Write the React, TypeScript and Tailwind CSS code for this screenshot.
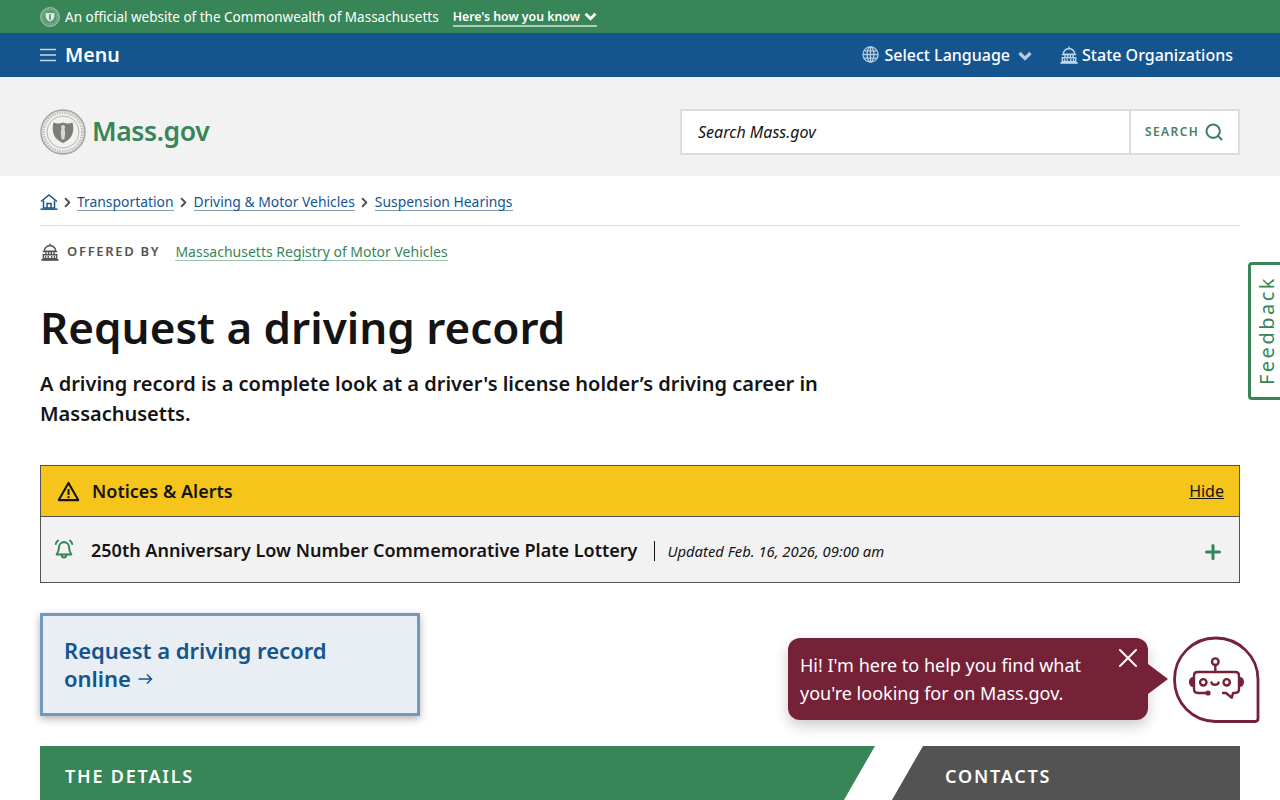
import React from 'react';
import { Search, Plus, X, ChevronRight } from 'lucide-react';

const HeavyChevron: React.FC<{ className?: string }> = ({ className }) => (
  <svg viewBox="0 0 14 10" fill="none" stroke="currentColor" strokeWidth="3.200" className={className}>
    <path d="M1.500 2 7 7.500 12.500 2" />
  </svg>
);

const Hamburger: React.FC<{ className?: string }> = ({ className }) => (
  <svg viewBox="0 0 16 14" fill="none" stroke="currentColor" strokeWidth="1.500" className={className}>
    <path d="M0 1.500h16M0 7h16M0 12.500h16" />
  </svg>
);

const Capitol: React.FC<{ className?: string }> = ({ className }) => (
  <svg viewBox="0 0 20 20" fill="none" stroke="currentColor" strokeWidth="1.500" className={className}>
    <path d="M10 .5v2.500" />
    <path d="M3.500 9c.6-3.600 3-6 6.500-6s5.900 2.400 6.500 6z" />
    <path d="M2 9.500h16M2.500 17.500v-4.500h15v4.500z" />
    <path d="M5.500 9.500v3.500M8.500 9.500v3.500M11.500 9.500v3.500M14.500 9.500v3.500" />
    <path d="M5 14.500v3M8 14.500v3M12 14.500v3M15 14.500v3" />
    <path d="M.5 18.800h19" strokeWidth="2" />
  </svg>
);

const Globe: React.FC<{ className?: string }> = ({ className }) => (
  <svg viewBox="0 0 18 18" fill="none" stroke="currentColor" strokeWidth="1.400" className={className}>
    <circle cx="9" cy="9" r="8" />
    <ellipse cx="9" cy="9" rx="3.600" ry="8" />
    <path d="M9 1v16M1 9h16M2.200 5.200h13.600M2.200 12.800h13.600" />
  </svg>
);

const Seal: React.FC<{ className?: string; ring: string; face: string; shield: string; inner: string }> = ({ className, ring, face, shield, inner }) => (
  <svg viewBox="0 0 46 46" className={className}>
    <circle cx="23" cy="23" r="22" fill={face} stroke={ring} strokeWidth="1.500" />
    <circle cx="23" cy="23" r="19.500" fill="none" stroke={ring} strokeWidth="3" strokeDasharray="1.500 1" opacity="0.6" />
    <circle cx="23" cy="23" r="16" fill={face} stroke={ring} strokeWidth="0.800" />
    <path d="M13.500 13.500c3 1.200 6 1.500 9.500 0 3.500 1.500 6.500 1.200 9.500 0 .8 3 1 6 .5 9-.8 5.500-4.500 9-10 11.500-5.500-2.500-9.200-6-10-11.500-.5-3-.3-6 .5-9z" fill={shield} />
    <path d="M23 16c1.400 0 2 1 2 2.200 0 .8-.4 1.400-.6 1.800 1.100 2 1 6-.2 10.500h-2.400c-1.200-4.500-1.300-8.500-.2-10.500-.2-.4-.6-1-.6-1.800 0-1.200.6-2.200 2-2.200z" fill={inner} />
  </svg>
);

const Bot: React.FC<{ className?: string }> = ({ className }) => (
  <svg viewBox="0 0 88 88" fill="none" stroke="#752138" strokeWidth="2.400" strokeLinejoin="round" strokeLinecap="round" className={className}>
    <path d="M43.800 2C20.500 2 2.500 20.500 2.500 43.500 2.500 67 20.500 85.500 43.800 85.500H83c1.800 0 3-1.200 3-3V43.500C86 20.500 67 2 43.800 2z" strokeWidth="2.800" />
    <circle cx="43.300" cy="25.700" r="3.300" />
    <path d="M43.300 29v7" />
    <path d="M26 57c-2.500 0-4-1.500-4-4V39.500c0-2.200 1.500-3.500 3.500-3.500h38c2 0 3.500 1.300 3.500 3.500V53c0 2.500-1.500 4-4 4h-2l-1.200 4.700L54 57h-3" />
    <path d="M26 57h10" />
    <circle cx="36" cy="57" r="2.600" fill="#752138" stroke="none" />
    <circle cx="31.300" cy="46.300" r="3.200" />
    <circle cx="54.700" cy="46.300" r="3.200" />
    <path d="M39.500 46.500c.6 3 6.400 3 7 0" />
    <path d="M21 41c-3 .4-4 2.500-4 5s1 4.600 4 5zM68 41c3 .4 4 2.500 4 5s-1 4.600-4 5z" fill="#752138" stroke="none" />
  </svg>
);

const BellRing: React.FC<{ className?: string }> = ({ className }) => (
  <svg viewBox="0 0 24 24" fill="none" stroke="currentColor" strokeWidth="2.200" strokeLinecap="round" strokeLinejoin="round" className={className}>
    <path d="M6.500 10a5.500 5.500 0 0 1 11 0c0 4 1.200 6 2.500 8H4c1.300-2 2.500-4 2.500-8z" />
    <path d="M9.500 18c0 2 1 3.300 2.500 3.300s2.500-1.300 2.500-3.300" />
    <path d="M3 6.500c.5-1.600 1.300-2.800 2.500-3.700M21 6.500c-.5-1.600-1.300-2.800-2.500-3.700" />
  </svg>
);

const TriangleAlert: React.FC<{ className?: string }> = ({ className }) => (
  <svg viewBox="0 0 24 22" fill="none" stroke="currentColor" strokeWidth="2.200" strokeLinejoin="round" className={className}>
    <path d="M12 2 1.800 20h20.400z" />
    <path d="M12 8.500v6" strokeWidth="2.200" />
    <circle cx="12" cy="17" r="1.200" fill="currentColor" stroke="none" />
  </svg>
);

const HomeIcon: React.FC<{ className?: string }> = ({ className }) => (
  <svg viewBox="0 0 18 16" fill="none" stroke="currentColor" strokeWidth="1.500" className={className}>
    <path d="M1 7.500 9 1l8 6.500" />
    <path d="M3.500 6.500v7.500h11v-7.500" />
    <path d="M7 14v-4.500h4v4.500" />
    <path d="M.5 15.200h17" />
  </svg>
);

const SmallArrow: React.FC<{ className?: string }> = ({ className }) => (
  <svg viewBox="0 0 15 12" fill="none" stroke="currentColor" strokeWidth="1.500" className={className}>
    <path d="M.5 6h13M9 1.500 13.500 6 9 10.500" />
  </svg>
);

const Crumb: React.FC<{ label: string }> = ({ label }) => (
  <a className="text-[13.900px] leading-[17px] text-[#14558f] border-b border-[#7a9cbd]">{label}</a>
);

const App: React.FC = () => {
  return (
    <div className="relative h-[800px] overflow-hidden bg-white font-['Noto_Sans',sans-serif] text-[#141414]">
      <div className="h-[33px] bg-[#388557] flex items-center pl-10 pt-[2px] text-white">
        <Seal className="mb-[2px] w-[20px] h-[20px]" ring="#b9d3c3" face="#57966f" shield="#dfeae3" inner="#57966f" />
        <span className="ml-[5px] text-[13.500px]">An official website of the Commonwealth of Massachusetts</span>
        <span className="ml-[14px] flex items-center text-[12.300px] font-semibold border-b-2 border-[#afcdbb] leading-[16px]">
          Here's how you know
          <HeavyChevron className="ml-[4px] w-[13px] h-[9px]" />
        </span>
      </div>

      <div className="h-[44px] bg-[#14558f] flex items-center justify-between pl-10 pr-[47px] text-white">
        <div className="flex items-center">
          <Hamburger className="w-[16px] h-[14px] text-[#c8d8e8]" />
          <span className="ml-[9px] text-[19.600px] font-semibold">Menu</span>
        </div>
        <div className="flex items-center">
          <Globe className="w-[17px] h-[17px] mb-[1px] text-[#b5cbe0]" />
          <span className="ml-[5px] text-[16px] font-medium">Select Language</span>
          <HeavyChevron className="ml-[8px] mt-[2px] w-[14px] h-[10px] text-[#b5cbe0]" />
          <Capitol className="ml-[28px] w-[18px] h-[18px] text-[#c3d5e6]" />
          <span className="ml-[4px] text-[16px] font-medium">State Organizations</span>
        </div>
      </div>

      <div className="h-[99px] bg-[#f2f2f2] flex items-center justify-between px-10 pt-[11px]">
        <div className="flex items-center">
          <Seal className="w-[46px] h-[46px]" ring="#a3a39f" face="#f1f1ef" shield="#7d7d76" inner="#d8d8d2" />
          <span className="ml-[6px] text-[26.500px] font-semibold text-[#388557] tracking-[-0.4px]">Mass.gov</span>
        </div>
        <div className="w-[560px] h-[46px] bg-white border-2 border-[#dcdcdc] flex items-center">
          <span className="flex-1 pl-[16px] text-[16px] italic text-[#141414]">Search Mass.gov</span>
          <div className="w-[109px] h-full border-l-2 border-[#dcdcdc] flex items-center pl-[14px] text-[#467e5f]">
            <span className="text-[12px] font-semibold tracking-[1.400px]">SEARCH</span>
            <Search className="ml-[5px] w-[20px] h-[20px]" strokeWidth={2.500} />
          </div>
        </div>
      </div>

      <div className="mx-10">
        <div className="h-[50px] border-b border-[#dcdcdc] flex items-center pt-[3px]">
          <HomeIcon className="w-[18px] h-[16px] text-[#14558f]" />
          <ChevronRight className="ml-[2px] mr-[2px] w-[15px] h-[15px] text-[#535353]" strokeWidth={3} />
          <Crumb label="Transportation" />
          <ChevronRight className="mx-[2.500px] w-[15px] h-[15px] text-[#535353]" strokeWidth={3} />
          <Crumb label="Driving & Motor Vehicles" />
          <ChevronRight className="mx-[2.500px] w-[15px] h-[15px] text-[#535353]" strokeWidth={3} />
          <Crumb label="Suspension Hearings" />
        </div>

        <div className="h-[52px] flex items-center">
          <Capitol className="ml-[1px] w-[18px] h-[18px] text-[#535353]" />
          <span className="ml-[8px] text-[13px] font-semibold tracking-[1.700px] text-[#535353]">OFFERED BY</span>
          <a className="ml-[15px] text-[14px] leading-[17px] text-[#388557] border-b border-[#9dc2ab]">Massachusetts Registry of Motor Vehicles</a>
        </div>

        <h1 className="mt-[19px] text-[44px] leading-[60px] font-semibold text-[#141414]">Request a driving record</h1>
        <p className="mt-[12px] w-[860px] text-[20px] leading-[30px] font-semibold text-[#141414]">
          A driving record is a complete look at a driver's license holder’s driving career in Massachusetts.
        </p>

        <div className="mt-[36px] border border-[#535353]">
          <div className="h-[51px] bg-[#f6c51b] border-b border-[#535353] flex items-center pl-[16px] pr-[15px]">
            <TriangleAlert className="w-[23px] h-[21px] text-[#141414]" />
            <span className="ml-[12px] text-[18px] font-semibold">Notices & Alerts</span>
            <a className="ml-auto text-[16px] underline">Hide</a>
          </div>
          <div className="h-[65px] bg-[#f2f2f2] flex items-center pl-[12px] pr-[15px] pt-[2px]">
            <BellRing className="mb-[3px] w-[22px] h-[22px] text-[#388557]" />
            <span className="ml-[16px] text-[18px] font-semibold">250th Anniversary Low Number Commemorative Plate Lottery</span>
            <span className="ml-[17px] pl-[12px] border-l border-[#141414] text-[14.800px] leading-[20px] italic text-[#141414]">Updated Feb. 16, 2026, 09:00 am</span>
            <Plus className="ml-auto mt-[2px] w-[22px] h-[22px] text-[#388557]" strokeWidth={3.300} />
          </div>
        </div>

        <div className="mt-[30px] w-[380px] h-[103px] bg-[#e8eef4] border-[3px] border-[#7299bc] shadow-[0_3px_8px_rgba(0,0,0,0.3)] pl-[21px] pt-[20px] text-[22px] leading-[28px] font-semibold text-[#14558f]">
          Request a driving record
          <br />
          <span className="inline-flex items-center">
            online
            <SmallArrow className="ml-[7px] mt-[2px] w-[15px] h-[12px]" />
          </span>
        </div>

        <div className="mt-[30px] flex h-[80px]">
          <div className="w-[835px] bg-[#388557] [clip-path:polygon(0_0,100%_0,789px_100%,0_100%)] pl-[25px] pt-[18px] text-[18px] leading-[25px] font-semibold tracking-[1.800px] text-white">
            THE DETAILS
          </div>
          <div className="ml-[2px] flex-1 bg-[#535353] [clip-path:polygon(46px_0,100%_0,100%_100%,0_100%)] pl-[68px] pt-[18px] text-[18px] leading-[25px] font-semibold tracking-[1.800px] text-white">
            CONTACTS
          </div>
        </div>
      </div>

      <div className="absolute right-0 top-[262px] w-[32px] h-[138px] bg-white border-[3px] border-r-0 border-[#388557] rounded-l-[4px] flex items-center justify-center">
        <span className="ml-[3px] [writing-mode:vertical-rl] rotate-180 text-[20px] tracking-[2.500px] text-[#388557]">Feedback</span>
      </div>

      <div className="absolute left-[788px] top-[638px] w-[360px] h-[82px] bg-[#752138] rounded-[12px] shadow-[0_6px_14px_rgba(0,0,0,0.2)] pl-[12px] pt-[13px] text-[18px] leading-[28px] text-white">
        <p>Hi! I'm here to help you find what</p>
        <p>you're looking for on Mass.gov.</p>
        <X className="absolute right-[4px] top-[4px] w-[32px] h-[32px]" strokeWidth={1.500} />
        <div className="absolute left-full top-[26px] border-y-[15px] border-l-[20px] border-y-transparent border-l-[#752138]" />
      </div>

      <Bot className="absolute left-[1172px] top-[636px] w-[88px] h-[88px]" />
    </div>
  );
};

export default App;
